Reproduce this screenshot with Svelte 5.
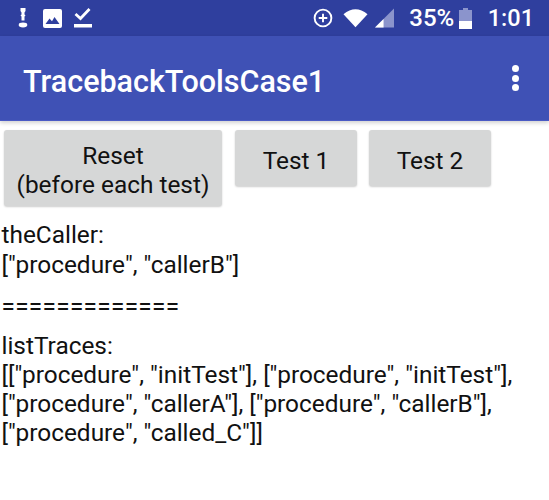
<script>
  const buttons = [
    { lines: ['Reset', '(before each test)'], width: 218 },
    { lines: ['Test 1'], width: 122 },
    { lines: ['Test 2'], width: 122 }
  ];
</script>

<div class="screen">
  <div class="status-bar">
    <div class="status-left">
      <svg width="10" height="20" viewBox="0 0 10 20">
        <path d="M2.500 0 h5 v3 l-1 1.500 v2 l1 1 l-1 1 v4 h-3 v-4 l-1-1 l1-1 v-2 l-1-1.500z" fill="#fff" />
        <ellipse cx="5" cy="17" rx="4.300" ry="2.400" fill="#fff" />
      </svg>
      <svg width="19" height="19" viewBox="0 0 19 19">
        <rect width="19" height="19" rx="2" fill="#fff" />
        <path d="M2.500 15 l4-5.500 l2.500 2.800 l2.500-4.300 l5 7z" fill="#2f3f9e" />
      </svg>
      <svg class="check" width="18" height="21" viewBox="0 0 18 21">
        <path d="M1.500 6 l5 4.500 l9-9.500" fill="none" stroke="#fff" stroke-width="2.800" />
        <rect y="16" width="18" height="3.500" fill="#fff" />
      </svg>
    </div>
    <div class="status-right">
      <svg width="20" height="20" viewBox="0 0 21 21">
        <circle cx="10.500" cy="10.500" r="8.800" fill="none" stroke="#fff" stroke-width="2" />
        <path d="M10.500 6 v9 M6 10.500 h9" stroke="#fff" stroke-width="2" />
      </svg>
      <svg class="wifi" width="25" height="20" viewBox="0 0 26 20">
        <path d="M0.500 6 Q13 -4 25.500 6 L13 19.500z" fill="#fff" />
      </svg>
      <svg class="signal" width="19" height="20" viewBox="0 0 20 20">
        <path d="M20 0 V20 H0z" fill="#8b94cc" />
        <path d="M9 11 V20 H0z" fill="#fff" />
      </svg>
      <span class="battery-text">35%</span>
      <svg class="battery" width="13" height="21" viewBox="0 0 13 21">
        <path d="M4 0 h5 v2 h4 v19 H0 V2 h4z" fill="#8b94cc" />
        <rect y="13" width="13" height="8" fill="#fff" />
      </svg>
      <span class="clock">1:01</span>
    </div>
  </div>

  <div class="app-bar">
    <h1>TracebackToolsCase1</h1>
    <div class="overflow">
      <span></span>
      <span></span>
      <span></span>
    </div>
  </div>

  <div class="actions">
    {#each buttons as button}
      <button style="width: {button.width}px">
        {#each button.lines as line}
          <span>{line}</span>
        {/each}
      </button>
    {/each}
  </div>

  <div class="output">
    <p class="caller">theCaller:<br />["procedure", "callerB"]</p>
    <p class="divider">=============</p>
    <p class="traces">
      listTraces:<br />
      [["procedure", "initTest"], ["procedure", "initTest"],<br />
      ["procedure", "callerA"], ["procedure", "callerB"],<br />
      ["procedure", "called_C"]]
    </p>
  </div>
</div>

<style>
  :global(body) {
    margin: 0;
    background: #fff;
  }

  .screen {
    width: 549px;
    height: 500px;
    overflow: hidden;
    font-family: Roboto, "Liberation Sans", sans-serif;
    color: #111;
  }

  .status-bar {
    height: 36px;
    background: #2f3f9e;
    display: flex;
    justify-content: space-between;
    align-items: center;
    color: #fff;
  }

  .status-left {
    display: flex;
    align-items: center;
    gap: 15px;
    padding-left: 18px;
  }

  .check {
    margin-left: -3px;
  }

  .status-right {
    display: flex;
    align-items: center;
    padding-right: 15px;
  }

  .wifi {
    margin-left: 10px;
  }

  .signal {
    margin-left: 7px;
  }

  .battery-text {
    margin-left: 15px;
    font-size: 24px;
    font-weight: 500;
  }

  .battery {
    margin-left: 5px;
  }

  .clock {
    margin-left: 15.500px;
    font-size: 23.500px;
    font-weight: 500;
  }

  .app-bar {
    height: 85px;
    background: #3f51b5;
    border-bottom: 1px solid #4a5ac4;
    box-shadow: 0 2px 4px rgba(0, 0, 0, 0.18);
    display: flex;
    align-items: center;
    justify-content: space-between;
    padding: 0 30px 0 23px;
    box-sizing: border-box;
  }

  h1 {
    margin: 7px 0 0;
    color: #fff;
    font-size: 30.500px;
    font-weight: 500;
  }

  .overflow {
    display: flex;
    flex-direction: column;
    gap: 2.300px;
  }

  .overflow span {
    width: 7px;
    height: 7px;
    border-radius: 50%;
    background: #fff;
  }

  .actions {
    display: flex;
    align-items: flex-start;
    gap: 12px;
    padding: 9px 0 0 4px;
  }

  button {
    height: 56px;
    padding: 4px 0 0;
    border: none;
    border-radius: 3px;
    background: #d6d7d7;
    box-shadow: 0 1px 2px rgba(0, 0, 0, 0.2);
    font: inherit;
    font-size: 24.400px;
    line-height: 29px;
    color: #111;
    display: flex;
    flex-direction: column;
    align-items: center;
    justify-content: center;
  }

  button:first-child {
    height: 76px;
    padding-top: 3px;
    margin-right: 1px;
  }

  .output {
    padding: 14px 0 0 1.500px;
    font-size: 24.400px;
    line-height: 30px;
  }

  p {
    margin: 0;
  }

  .caller {
    margin-bottom: 12px;
  }

  .divider {
    margin-bottom: 9px;
    letter-spacing: 0.300px;
  }

  .traces {
    line-height: 29px;
  }
</style>
